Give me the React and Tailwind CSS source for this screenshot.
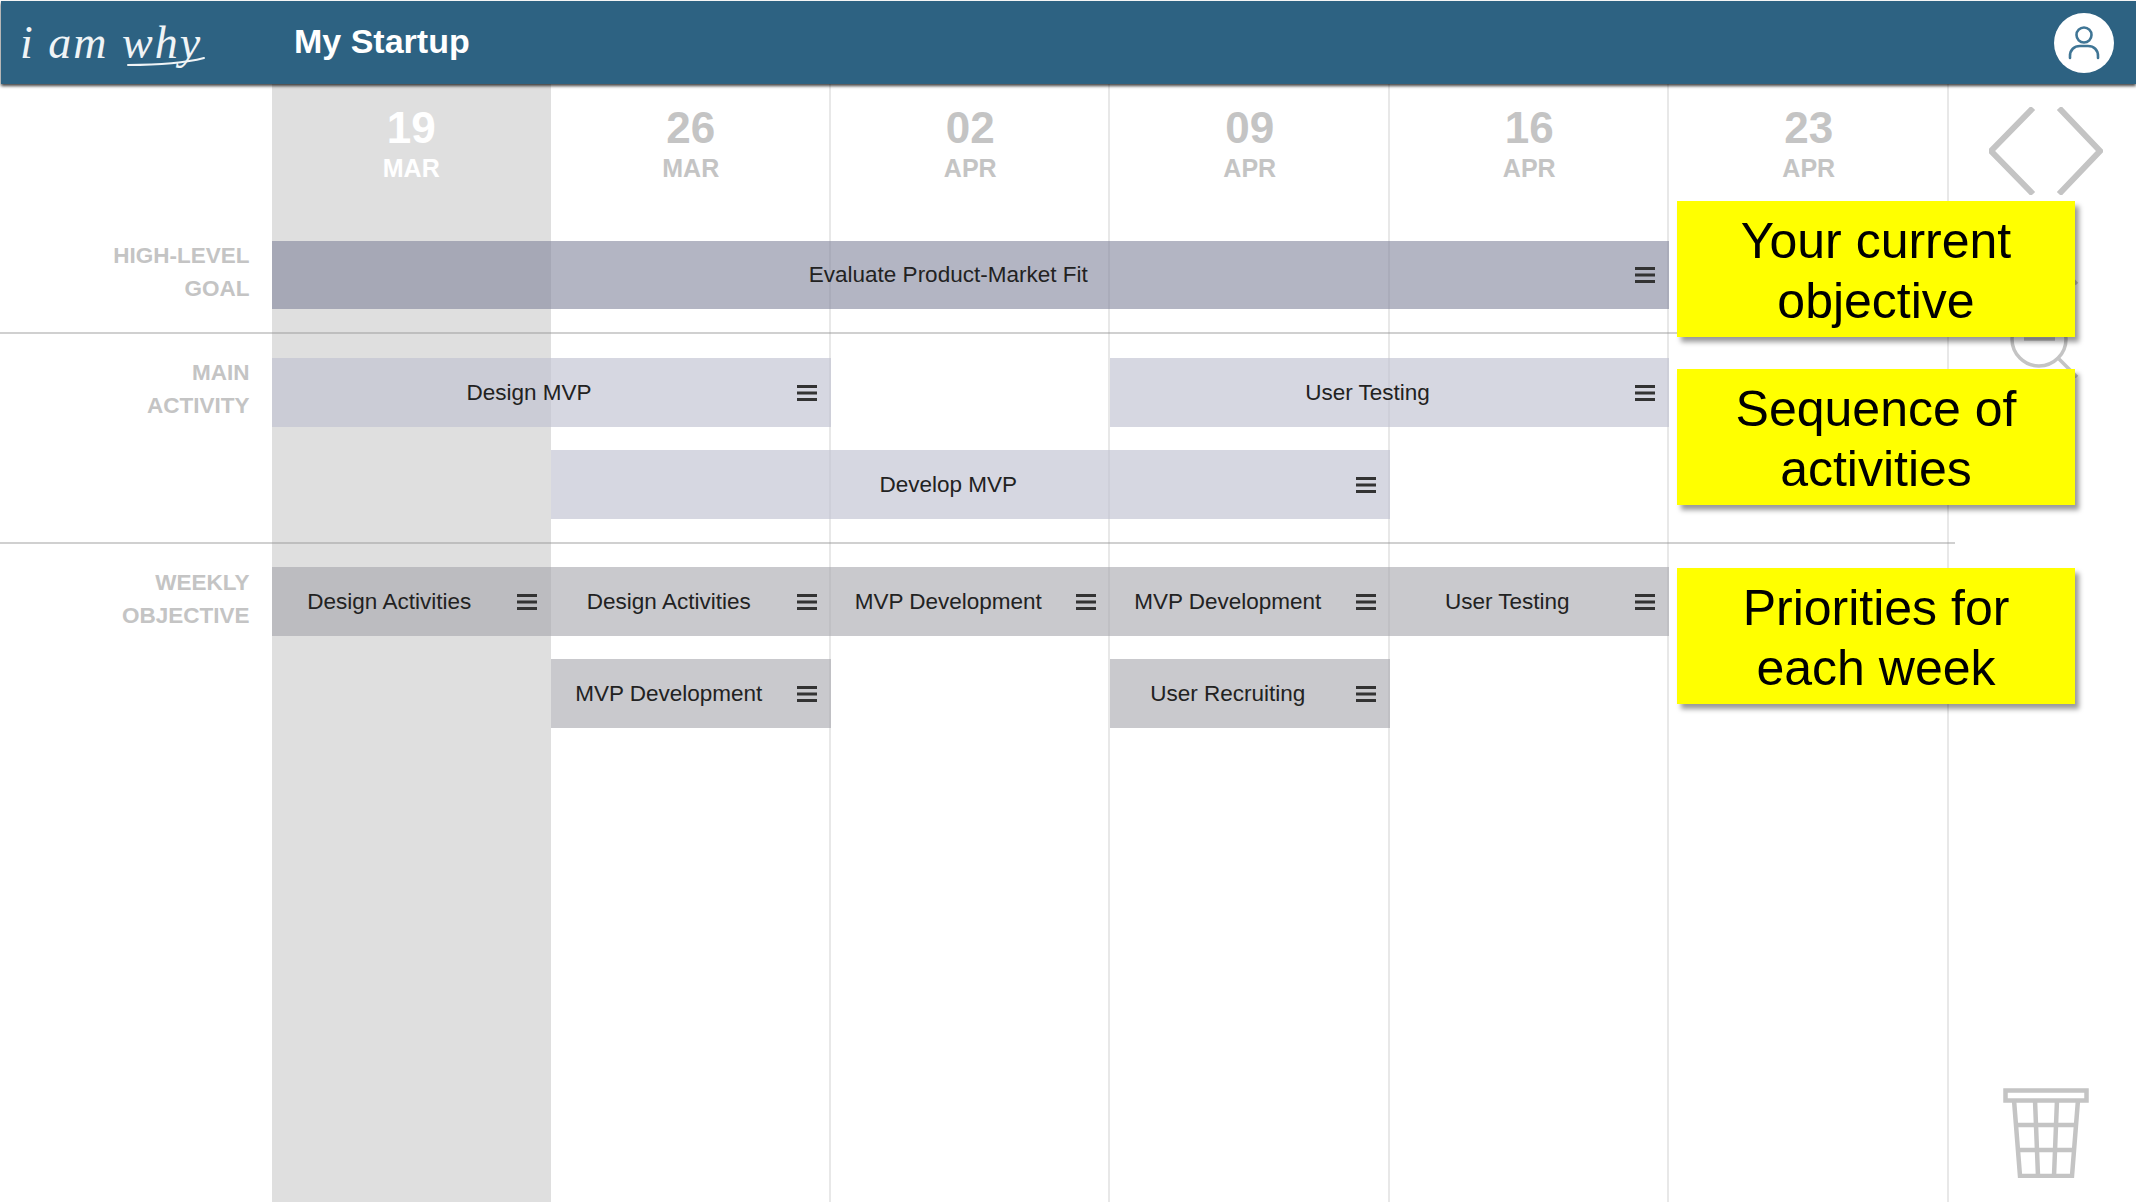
function Menu() {
  return (
    <svg width="22" height="16" viewBox="0 0 22 16" className="mr-[13px] ml-[9px] shrink-0">
      <rect x="1" y="0" width="20" height="3" fill="#333" />
      <rect x="1" y="6.5" width="20" height="3" fill="#333" />
      <rect x="1" y="13" width="20" height="3" fill="#333" />
    </svg>
  );
}

function Bar({ label, className, tone }) {
  return (
    <div className={`flex items-center ${tone} ${className}`}>
      <span className="flex-1 text-center whitespace-nowrap text-[22.5px] text-[#222]">{label}</span>
      <Menu />
    </div>
  );
}

function DateHead({ day, mon, className, now }) {
  return (
    <div className={`row-start-1 flex flex-col items-center pt-[19px] font-bold ${now ? "text-white" : "text-[#c4c4c4]"} ${className}`}>
      <span className="text-[44px] leading-[50px]">{day}</span>
      <span className="text-[25px] leading-[30px]">{mon}</span>
    </div>
  );
}

function Note({ lines, className }) {
  return (
    <div className={`absolute left-[1677px] w-[398px] h-[136px] pt-[4px] bg-[#ffff00] text-black text-[50px] leading-[60px] text-center flex flex-col justify-center shadow-[4px_5px_5px_rgba(0,0,0,0.4)] ${className}`}>
      <span>{lines[0]}</span>
      <span>{lines[1]}</span>
    </div>
  );
}

const high = "bg-[rgba(128,131,155,0.6)]";
const main = "bg-[rgba(193,195,210,0.66)]";
const week = "bg-[rgba(165,165,172,0.6)]";
const label = "text-right pr-[22px] font-bold text-[22.5px] leading-[33px] text-[#c4c4c4] self-center";
const vline = "row-start-1 row-end-[16] border-r-2 border-[#e8e8e8]";
const hline = "col-start-1 col-end-9 w-[1955px] bg-[rgba(150,150,150,0.45)]";

export default function App() {
  return (
    <div className="relative w-[2136px] h-[1202px] overflow-hidden bg-white flex flex-col font-['Liberation_Sans',Arial,sans-serif]">
      <header className="relative z-10 h-[83px] mt-px ml-px shrink-0 bg-[#2d6282] shadow-[0_2px_3px_rgba(0,0,0,0.75)] flex items-center">
        <div className="relative w-[293px] h-full shrink-0">
          <span className="absolute left-[19px] top-[16px] whitespace-nowrap font-['Liberation_Serif',serif] italic text-[46px] leading-[52px] tracking-[2px] text-[#f0f4f6]">i am why</span>
          <svg className="absolute left-[125px] top-[55px]" width="80" height="12" viewBox="0 0 80 12" fill="none">
            <path d="M2 9 C25 9 55 8 78 2" stroke="#f0f4f6" strokeWidth="2" strokeLinecap="round" />
          </svg>
        </div>
        <span className="font-bold text-[34px] text-white -mt-[2px]">My Startup</span>
        <div className="ml-auto mr-[22px] w-[60px] h-[60px] rounded-full bg-white flex items-center justify-center">
          <svg width="32" height="36" viewBox="0 0 32 36" fill="none" stroke="#3f7595" strokeWidth="2.6">
            <circle cx="16" cy="10" r="7.5" />
            <path d="M2 33 V31 C2 25 6 21 12 21 H20 C26 21 30 25 30 31 V33" strokeLinecap="round" />
          </svg>
        </div>
      </header>

      <main className="flex-1 grid grid-cols-[271.5px_repeat(6,279.5px)_1fr] grid-rows-[157px_68px_23px_2px_24px_69px_23px_69px_23px_2px_23px_69px_23px_69px_1fr]">
        <div className="col-start-2 row-start-1 row-end-[16] bg-[#dfdfdf]" />
        <div className={`col-start-3 ${vline}`} />
        <div className={`col-start-4 ${vline}`} />
        <div className={`col-start-5 ${vline}`} />
        <div className={`col-start-6 ${vline}`} />
        <div className={`col-start-7 ${vline}`} />

        <DateHead day="19" mon="MAR" className="col-start-2" now />
        <DateHead day="26" mon="MAR" className="col-start-3" />
        <DateHead day="02" mon="APR" className="col-start-4" />
        <DateHead day="09" mon="APR" className="col-start-5" />
        <DateHead day="16" mon="APR" className="col-start-6" />
        <DateHead day="23" mon="APR" className="col-start-7" />

        <div className="col-start-8 row-start-1 row-end-[3] pl-[40px] pt-[23px]">
          <svg width="114" height="88" viewBox="0 0 114 88" fill="none" stroke="#c4c4c4" strokeWidth="6">
            <path d="M44 1 L2 44 L44 87" />
            <path d="M70 1 L111 44 L70 87" />
          </svg>
        </div>
        <div className="col-start-8 row-start-1 row-end-[8] pl-[40px] pt-[115px]">
          <svg width="100" height="190" viewBox="0 0 100 190" fill="none" stroke="#c4c4c4" strokeWidth="3.5">
            <circle cx="50" cy="47" r="27" />
            <path d="M36 47 H64 M50 33 V61" />
            <path d="M70 67 L88 85" />
            <circle cx="50" cy="140" r="27" />
            <path d="M35 140 H66" />
            <path d="M70 160 L88 178" />
          </svg>
        </div>
        <div className="col-start-8 row-start-[15] self-end pl-[54px] pb-[24px]">
          <svg width="86" height="90" viewBox="0 0 86 90" fill="none" stroke="#c4c4c4" strokeWidth="4.5">
            <rect x="2.5" y="2.5" width="81" height="10" />
            <path d="M11 12 L17 88 H69 L75 12" />
            <path d="M32 12 L35 88 M54 12 L51 88" />
            <path d="M13 37 H73 M15 62 H71" />
          </svg>
        </div>

        <div className={`col-start-1 row-start-2 pb-[6px] ${label}`}>HIGH-LEVEL<br />GOAL</div>
        <div className={`col-start-1 row-start-6 pb-[8px] ${label}`}>MAIN<br />ACTIVITY</div>
        <div className={`col-start-1 row-start-12 pb-[6px] ${label}`}>WEEKLY<br />OBJECTIVE</div>

        <Bar label="Evaluate Product-Market Fit" className="col-start-2 col-end-7 row-start-2 w-[1397.5px]" tone={high} />
        <div className={`row-start-4 ${hline}`} />
        <Bar label="Design MVP" className="col-start-2 col-end-4 row-start-6" tone={main} />
        <Bar label="User Testing" className="col-start-5 col-end-7 row-start-6" tone={main} />
        <Bar label="Develop MVP" className="col-start-3 col-end-6 row-start-8" tone={main} />
        <div className={`row-start-10 ${hline}`} />
        <Bar label="Design Activities" className="col-start-2 row-start-12" tone={week} />
        <Bar label="Design Activities" className="col-start-3 row-start-12" tone={week} />
        <Bar label="MVP Development" className="col-start-4 row-start-12" tone={week} />
        <Bar label="MVP Development" className="col-start-5 row-start-12" tone={week} />
        <Bar label="User Testing" className="col-start-6 row-start-12" tone={week} />
        <Bar label="MVP Development" className="col-start-3 row-start-14" tone={week} />
        <Bar label="User Recruiting" className="col-start-5 row-start-14" tone={week} />
      </main>

      <Note lines={["Your current", "objective"]} className="top-[201px]" />
      <Note lines={["Sequence of", "activities"]} className="top-[369px]" />
      <Note lines={["Priorities for", "each week"]} className="top-[568px]" />
    </div>
  );
}
